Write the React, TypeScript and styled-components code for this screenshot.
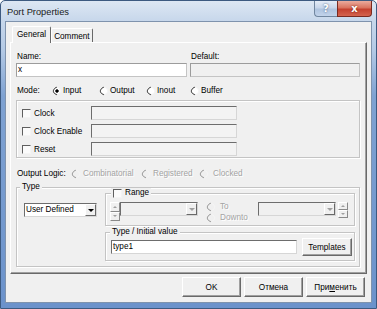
import React from "react";
import styled, { createGlobalStyle, css } from "styled-components";

const GlobalStyle = createGlobalStyle`
  html, body {
    margin: 0;
    padding: 0;
    background: #fff;
  }
  body {
    font-family: "Liberation Sans", Arial, sans-serif;
    font-size: 8.2px;
    color: #000;
  }
  * {
    box-sizing: border-box;
  }
`;

const Window = styled.div`
  width: 377px;
  height: 309px;
  display: flex;
  flex-direction: column;
  border: 1px solid #3d5a80;
  border-radius: 5px 5px 0 0;
  background: linear-gradient(to bottom, #dde7f3 0px, #c7d7eb 20px, #b3c9e5 50px, #7fa2d2 95px, #6b92cb 100%);
  overflow: hidden;
`;

const TitleBar = styled.div`
  height: 20px;
  display: flex;
  align-items: flex-start;
  padding-right: 4px;
`;

const Title = styled.div`
  flex: 1;
  padding: 5px 0 0 6px;
  font-size: 9.3px;
  line-height: 12px;
  color: #1b1b1b;
`;

const CaptionButton = styled.div<{ $kind: "help" | "close" }>`
  height: 16px;
  display: flex;
  align-items: center;
  justify-content: center;
  color: #fff;
  font-family: "DejaVu Sans", sans-serif;
  font-weight: bold;
  font-size: 10px;
  border: 1px solid;
  border-top: none;
  ${({ $kind }) =>
    $kind === "close"
      ? css`
          width: 35px;
          background: linear-gradient(#eaab9d, #d9735f 45%, #c4412f 55%, #d4644f);
          border-color: #7a2a20;
          border-radius: 0 0 4px 0;
          text-shadow: 0 0 2px #6b1d12;
        `
      : css`
          width: 23px;
          background: linear-gradient(#e5ecf6, #c8d6ea 45%, #afc4df 55%, #c2d3ea);
          border-color: #71869f;
          border-right: none;
          border-radius: 0 0 0 4px;
          text-shadow: 0 0 2px #31486b;
        `}
`;

const Client = styled.div`
  flex: 1;
  margin: 0 4px 5px 4px;
  background: #f0f0f0;
  border: 1px solid #7f93ad;
  display: flex;
  flex-direction: column;
`;

const TabStrip = styled.div`
  display: flex;
  align-items: flex-end;
  height: 16px;
  margin-top: 4px;
  padding-left: 6px;
`;

const Tab = styled.div<{ $active?: boolean }>`
  position: relative;
  z-index: ${({ $active }) => ($active ? 1 : 0)};
  height: ${({ $active }) => ($active ? 17 : 14)}px;
  margin-bottom: ${({ $active }) => ($active ? -1 : 0)}px;
  padding: 3px ${({ $active }) => ($active ? 4 : 2)}px 0;
  line-height: 10px;
  background: #f0f0f0;
  border: 1px solid;
  border-color: #fff #696969 #f0f0f0 #fff;
  border-bottom: none;
  border-radius: 2px 2px 0 0;
`;

const Panel = styled.div`
  margin: 0 4px;
  border: 1px solid;
  border-color: #fff #696969 #696969 #fff;
  box-shadow: inset -1px -1px 0 #a0a0a0;
  padding: 9px 6px 6px 5px;
  display: flex;
  flex-direction: column;
`;

const NameGrid = styled.div`
  display: grid;
  grid-template-columns: 171px 170px;
  column-gap: 3px;
  row-gap: 1px;
  line-height: 10px;
`;

const Label = styled.div`
  padding-left: 1px;
  height: 10px;
`;

const Field = styled.div<{ $w: number; $h?: number; $bg?: string; $tone?: "light" | "sunken" }>`
  width: ${({ $w }) => $w}px;
  height: ${({ $h }) => $h ?? 14}px;
  flex: none;
  background: ${({ $bg }) => $bg ?? "#fff"};
  border: 1px solid;
  border-color: ${({ $tone }) =>
    $tone === "light" ? "#9c9c9c #c4c4c4 #c4c4c4 #9c9c9c" : "#6d6d6d #d6d6d6 #d6d6d6 #6d6d6d"};
  padding: 0 1px;
  line-height: 12px;
  white-space: nowrap;
`;

const OptionRow = styled.div<{ $mt: number }>`
  display: flex;
  align-items: center;
  height: 11px;
  margin-top: ${({ $mt }) => $mt}px;
`;

const RowLabel = styled.div<{ $w: number }>`
  width: ${({ $w }) => $w}px;
  flex: none;
  padding-left: 1px;
`;

const OptionItem = styled.div<{ $w?: number; $gap: number; $disabled?: boolean }>`
  display: flex;
  align-items: center;
  gap: ${({ $gap }) => $gap}px;
  height: 11px;
  flex: none;
  ${({ $w }) => $w && css`width: ${$w}px;`}
  color: ${({ $disabled }) => ($disabled ? "#a3a3a3" : "#000")};
  ${({ $disabled }) => $disabled && css`text-shadow: 1px 1px 0 #fff;`}
  white-space: nowrap;
`;

const RadioDot = styled.span<{ $checked?: boolean; $disabled?: boolean }>`
  width: 8px;
  height: 8px;
  flex: none;
  border-radius: 50%;
  border: 1px solid;
  border-color: ${({ $disabled }) =>
    $disabled ? "#a0a0a0 #f4f4f4 #f4f4f4 #a0a0a0" : "#4f4f4f #f4f4f4 #f4f4f4 #4f4f4f"};
  transform: rotate(-45deg);
  background: ${({ $checked, $disabled }) =>
    $checked
      ? "radial-gradient(circle, #000 0 1.4px, #fff 1.9px)"
      : $disabled
      ? "#f0f0f0"
      : "#fff"};
`;

const CheckBox = styled.span`
  width: 9px;
  height: 9px;
  flex: none;
  border: 1px solid;
  border-color: #5f5f5f #f4f4f4 #f4f4f4 #5f5f5f;
  background: #fbfbfb;
`;

const SignalGroup = styled.div`
  margin-top: 4px;
  border: 1px solid #c4c4c4;
  box-shadow: inset 1px 1px 0 #fff, 1px 1px 0 #fff;
  padding: 5px 0 1px 5px;
  display: flex;
  flex-direction: column;
  gap: 4px;
`;

const SignalRow = styled.div`
  display: flex;
  align-items: center;
  height: 14px;
`;

const CheckLabel = styled.div`
  width: 69px;
  flex: none;
  display: flex;
  align-items: center;
  gap: 3px;
`;

const GroupBox = styled.div<{ $mt: number; $w?: number }>`
  margin-top: ${({ $mt }) => $mt}px;
  border: 1px solid #c4c4c4;
  box-shadow: inset 1px 1px 0 #fff, 1px 1px 0 #fff;
  ${({ $w }) => $w && css`width: ${$w}px;`}
`;

const Legend = styled.div<{ $ml: number }>`
  display: flex;
  align-items: center;
  gap: 3px;
  width: fit-content;
  height: 10px;
  line-height: 10px;
  margin: -6px 0 0 ${({ $ml }) => $ml}px;
  padding: 0 2px;
  background: #f0f0f0;
`;

const TypeBody = styled.div`
  display: flex;
  align-items: flex-start;
  padding: 0 0 5px 7px;
`;

const TypeRight = styled.div`
  width: 250px;
  margin-left: 8px;
  display: flex;
  flex-direction: column;
`;

const Combo = styled.div<{ $w: number; $disabled?: boolean; $mt?: number }>`
  width: ${({ $w }) => $w}px;
  height: 14px;
  flex: none;
  margin-top: ${({ $mt }) => $mt ?? 0}px;
  display: flex;
  background: ${({ $disabled }) => ($disabled ? "#f0f0f0" : "#fff")};
  border: 1px solid;
  border-color: #6d6d6d #d6d6d6 #d6d6d6 #6d6d6d;
  line-height: 12px;
`;

const ComboText = styled.div`
  flex: 1;
  padding-left: 1px;
  white-space: nowrap;
  overflow: hidden;
`;

const DropButton = styled.div<{ $disabled?: boolean }>`
  width: 11px;
  flex: none;
  display: flex;
  align-items: center;
  justify-content: center;
  background: #f0f0f0;
  border: 1px solid;
  border-color: #fff #696969 #696969 #fff;

  &::after {
    content: "";
    border-left: 3px solid transparent;
    border-right: 3px solid transparent;
    border-top: 3px solid ${({ $disabled }) => ($disabled ? "#a0a0a0" : "#000")};
  }
`;

const Spin = styled.div<{ $h: number; $ml?: number }>`
  width: 10px;
  height: ${({ $h }) => $h}px;
  flex: none;
  margin-left: ${({ $ml }) => $ml ?? 0}px;
  display: flex;
  flex-direction: column;
`;

const SpinHalf = styled.div<{ $dir: "up" | "down" }>`
  flex: 1;
  display: flex;
  align-items: center;
  justify-content: center;
  background: #f0f0f0;
  border: 1px solid;
  border-color: #fff #8a8a8a #8a8a8a #fff;

  &::after {
    content: "";
    border-left: 2px solid transparent;
    border-right: 2px solid transparent;
    ${({ $dir }) =>
      $dir === "up" ? "border-bottom: 2px solid #a0a0a0;" : "border-top: 2px solid #a0a0a0;"}
  }
`;

const RangeRow = styled.div`
  display: flex;
  align-items: flex-start;
  height: 21px;
  margin: 4px 0 2px;
  padding-left: 4px;
`;

const DirColumn = styled.div`
  width: 51px;
  flex: none;
  margin: -1px 0 0 9px;
  display: flex;
  flex-direction: column;
`;

const InitRow = styled.div`
  display: flex;
  align-items: center;
  gap: 5px;
  height: 18px;
  margin: 1px 0 4px;
  padding-left: 5px;
`;

const Button = styled.div<{ $w: number; $h: number }>`
  width: ${({ $w }) => $w}px;
  height: ${({ $h }) => $h}px;
  flex: none;
  display: flex;
  align-items: center;
  justify-content: center;
  background: #f0f0f0;
  border: 1px solid;
  border-color: #fff #696969 #696969 #fff;
  box-shadow: inset -1px -1px 0 #a0a0a0;
  white-space: nowrap;
`;

const ButtonRow = styled.div`
  display: flex;
  justify-content: flex-end;
  gap: 3px;
  margin-top: 3px;
  padding-right: 6px;
`;

const Accel = styled.span`
  text-decoration: underline;
`;

interface RadioProps {
  label: string;
  width?: number;
  gap?: number;
  checked?: boolean;
  disabled?: boolean;
}

const Radio: React.FC<RadioProps> = ({ label, width, gap = 2, checked, disabled }) => (
  <OptionItem $w={width} $gap={gap} $disabled={disabled}>
    <RadioDot $checked={checked} $disabled={disabled} />
    {label}
  </OptionItem>
);

const signals = ["Clock", "Clock Enable", "Reset"];

export default function App() {
  return (
    <>
      <GlobalStyle />
      <Window>
        <TitleBar>
          <Title>Port Properties</Title>
          <CaptionButton $kind="help">?</CaptionButton>
          <CaptionButton $kind="close">x</CaptionButton>
        </TitleBar>
        <Client>
          <TabStrip>
            <Tab $active>General</Tab>
            <Tab>Comment</Tab>
          </TabStrip>
          <Panel>
            <NameGrid>
              <Label>Name:</Label>
              <Label>Default:</Label>
              <Field $w={171} $tone="light">x</Field>
              <Field $w={170} $tone="light" $bg="#f0f0f0" />
            </NameGrid>

            <OptionRow $mt={8}>
              <RowLabel $w={37}>Mode:</RowLabel>
              <Radio label="Input" width={47} checked />
              <Radio label="Output" width={47} />
              <Radio label="Inout" width={44} />
              <Radio label="Buffer" />
            </OptionRow>

            <SignalGroup>
              {signals.map((s) => (
                <SignalRow key={s}>
                  <CheckLabel>
                    <CheckBox />
                    {s}
                  </CheckLabel>
                  <Field $w={146} $bg="#f3f3f3" />
                </SignalRow>
              ))}
            </SignalGroup>

            <OptionRow $mt={10}>
              <RowLabel $w={56}>Output Logic:</RowLabel>
              <Radio label="Combinatorial" width={70} gap={3} disabled />
              <Radio label="Registered" width={58} gap={3} disabled />
              <Radio label="Clocked" gap={5} disabled />
            </OptionRow>

            <GroupBox $mt={8}>
              <Legend $ml={3}>Type</Legend>
              <TypeBody>
                <Combo $w={73} $mt={11}>
                  <ComboText>User Defined</ComboText>
                  <DropButton />
                </Combo>
                <TypeRight>
                  <GroupBox $mt={1}>
                    <Legend $ml={5}>
                      <CheckBox />
                      Range
                    </Legend>
                    <RangeRow>
                      <Spin $h={19}>
                        <SpinHalf $dir="up" />
                        <SpinHalf $dir="down" />
                      </Spin>
                      <Combo $w={78} $disabled>
                        <ComboText />
                        <DropButton $disabled />
                      </Combo>
                      <DirColumn>
                        <Radio label="To" gap={5} disabled />
                        <Radio label="Downto" gap={5} disabled />
                      </DirColumn>
                      <Combo $w={78} $disabled>
                        <ComboText />
                        <DropButton $disabled />
                      </Combo>
                      <Spin $h={16} $ml={2}>
                        <SpinHalf $dir="up" />
                        <SpinHalf $dir="down" />
                      </Spin>
                    </RangeRow>
                  </GroupBox>
                  <GroupBox $mt={6}>
                    <Legend $ml={4}>Type / Initial value</Legend>
                    <InitRow>
                      <Field $w={186}>type1</Field>
                      <Button $w={50} $h={18}>Templates</Button>
                    </InitRow>
                  </GroupBox>
                </TypeRight>
              </TypeBody>
            </GroupBox>
          </Panel>
          <ButtonRow>
            <Button $w={59} $h={20}>OK</Button>
            <Button $w={59} $h={20}>Отмена</Button>
            <Button $w={59} $h={20}>
              При<Accel>м</Accel>енить
            </Button>
          </ButtonRow>
        </Client>
      </Window>
    </>
  );
}
